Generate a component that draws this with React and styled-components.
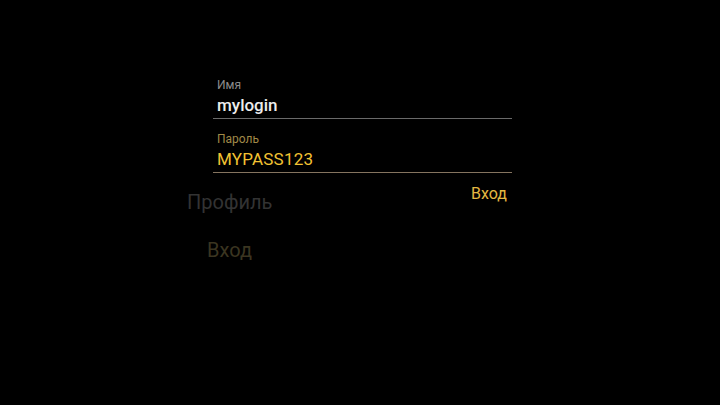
import React from "react";
import styled, { createGlobalStyle } from "styled-components";

const GlobalStyle = createGlobalStyle`
  html, body {
    margin: 0;
    padding: 0;
    background: #000;
  }
  body {
    font-family: Roboto, "Noto Sans", "Liberation Sans", sans-serif;
  }
`;

const Screen = styled.div`
  width: 720px;
  height: 405px;
  background: #000;
  display: grid;
  overflow: hidden;
  & > * {
    grid-area: 1 / 1;
  }
`;

const Menu = styled.nav`
  display: flex;
  flex-direction: column;
  align-items: flex-start;
  gap: 24px;
  padding: 190px 0 0 187px;
`;

const MenuItem = styled.div`
  font-size: 20px;
  line-height: 24px;
  color: ${(p) => p.$color};
  margin-left: ${(p) => p.$indent || 0}px;
`;

const Form = styled.form`
  display: flex;
  flex-direction: column;
  gap: 13px;
  width: 299px;
  margin: 78px 0 0 213px;
  align-self: start;
`;

const Field = styled.label`
  display: flex;
  flex-direction: column;
  gap: 3px;
  padding: 0 0 3px 4px;
  border-bottom: 1px solid ${(p) => (p.$active ? "#85745f" : "#6a6a6a")};
`;

const Label = styled.span`
  font-size: 12px;
  line-height: 14px;
  color: ${(p) => (p.$active ? "#a08a48" : "#8c8c8c")};
`;

const Value = styled.span`
  font-size: 17px;
  line-height: 20px;
  font-weight: ${(p) => (p.$active ? 400 : 500)};
  letter-spacing: ${(p) => (p.$active ? "0.2px" : "0")};
  color: ${(p) => (p.$active ? "#f2c232" : "#ececec")};
`;

const Actions = styled.div`
  display: flex;
  justify-content: flex-end;
  margin-top: -2px;
  padding-right: 5px;
`;

const SubmitButton = styled.button`
  background: none;
  border: none;
  padding: 0;
  font-family: inherit;
  font-size: 16px;
  line-height: 19px;
  color: #e3b842;
  cursor: pointer;
`;

export default function App() {
  return (
    <>
      <GlobalStyle />
      <Screen>
        <Menu>
          <MenuItem $color="#333333">Профиль</MenuItem>
          <MenuItem $color="#3b3520" $indent={20}>Вход</MenuItem>
        </Menu>
        <Form onSubmit={(e) => e.preventDefault()}>
          <Field>
            <Label>Имя</Label>
            <Value>mylogin</Value>
          </Field>
          <Field $active>
            <Label $active>Пароль</Label>
            <Value $active>MYPASS123</Value>
          </Field>
          <Actions>
            <SubmitButton type="submit">Вход</SubmitButton>
          </Actions>
        </Form>
      </Screen>
    </>
  );
}
